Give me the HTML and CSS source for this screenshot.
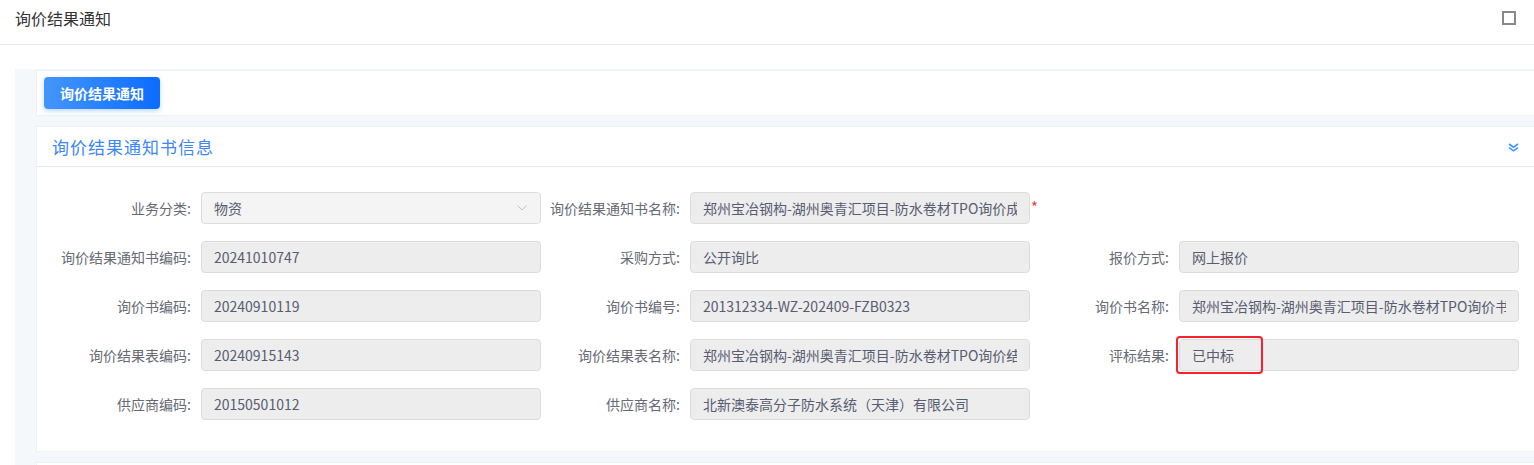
FILE: index.html
```html
<!DOCTYPE html>
<html lang="zh-CN">
<head>
<meta charset="utf-8">
<title>询价结果通知</title>
<link rel="stylesheet" href="styles.css">
</head>
<body>
<header class="page-header">
  <span class="page-title">询价结果通知</span>
  <span class="max-icon"></span>
</header>
<main class="main">
  <div class="content">
    <div class="card toolbar">
      <button class="btn-primary" type="button">询价结果通知</button>
    </div>
    <section class="card panel">
      <div class="panel-head">
        <span class="panel-title">询价结果通知书信息</span>
        <svg class="collapse-icon" width="11" height="9" viewBox="0 0 11 9"><polyline points="1,1 5.5,4.2 10,1" fill="none" stroke="#3f95ff" stroke-width="1.6"/><polyline points="1,4.6 5.5,7.8 10,4.6" fill="none" stroke="#3f95ff" stroke-width="1.6"/></svg>
      </div>
      <div class="form-grid">
        <div class="field">
          <label class="label">业务分类:</label>
          <div class="control select">
            <input class="input input-select" value="物资" readonly>
            <svg class="select-arrow" width="10" height="6" viewBox="0 0 10 6"><polyline points="0.5,0.5 5,5 9.5,0.5" fill="none" stroke="#c0c4cc" stroke-width="1"/></svg>
          </div>
        </div>
        <div class="field">
          <label class="label">询价结果通知书名称:</label>
          <div class="control">
            <input class="input" value="郑州宝冶钢构-湖州奥青汇项目-防水卷材TPO询价成交通知书" readonly>
            <span class="required">*</span>
          </div>
        </div>
        <div class="field"></div>

        <div class="field">
          <label class="label">询价结果通知书编码:</label>
          <div class="control"><input class="input" value="20241010747" readonly></div>
        </div>
        <div class="field">
          <label class="label">采购方式:</label>
          <div class="control"><input class="input" value="公开询比" readonly></div>
        </div>
        <div class="field">
          <label class="label">报价方式:</label>
          <div class="control"><input class="input" value="网上报价" readonly></div>
        </div>

        <div class="field">
          <label class="label">询价书编码:</label>
          <div class="control"><input class="input" value="20240910119" readonly></div>
        </div>
        <div class="field">
          <label class="label">询价书编号:</label>
          <div class="control"><input class="input" value="201312334-WZ-202409-FZB0323" readonly></div>
        </div>
        <div class="field">
          <label class="label">询价书名称:</label>
          <div class="control"><input class="input" value="郑州宝冶钢构-湖州奥青汇项目-防水卷材TPO询价书" readonly></div>
        </div>

        <div class="field">
          <label class="label">询价结果表编码:</label>
          <div class="control"><input class="input" value="20240915143" readonly></div>
        </div>
        <div class="field">
          <label class="label">询价结果表名称:</label>
          <div class="control"><input class="input" value="郑州宝冶钢构-湖州奥青汇项目-防水卷材TPO询价结果表" readonly></div>
        </div>
        <div class="field">
          <label class="label">评标结果:</label>
          <div class="control">
            <input class="input" value="已中标" readonly>
            <span class="highlight"></span>
          </div>
        </div>

        <div class="field">
          <label class="label">供应商编码:</label>
          <div class="control"><input class="input" value="20150501012" readonly></div>
        </div>
        <div class="field">
          <label class="label">供应商名称:</label>
          <div class="control"><input class="input" value="北新澳泰高分子防水系统（天津）有限公司" readonly></div>
        </div>
        <div class="field"></div>
      </div>
    </section>
    <div class="card next-card"></div>
  </div>
</main>
</body>
</html>
```
FILE: styles.css
```css
* { box-sizing: border-box; }

html, body {
  margin: 0;
  padding: 0;
  background: #ffffff;
  font-family: "Noto Sans CJK SC", "Noto Sans", sans-serif;
  overflow: hidden;
}

.page-header {
  height: 45px;
  border-bottom: 1px solid #e6e6e6;
  display: flex;
  align-items: center;
  justify-content: space-between;
  padding: 0 18px 9px 15px;
}

.page-title {
  font-size: 16px;
  color: #333333;
}

.max-icon {
  width: 14px;
  height: 14px;
  border: 2px solid #888888;
}

.main {
  padding-top: 24px;
}

.content {
  margin-left: 15px;
  background: #f5f8fb;
  padding: 1px 0 0 21px;
}

.card {
  background: #ffffff;
  border: 1px solid #eef1f5;
  border-right: none;
}

.toolbar {
  padding: 6px 0 6px 7px;
}

.btn-primary {
  display: block;
  width: 116px;
  height: 32px;
  border: none;
  border-radius: 4px;
  background: linear-gradient(90deg, #4596fa 0%, #0b6cff 100%);
  box-shadow: 0 2px 5px rgba(40, 120, 255, 0.3);
  color: #ffffff;
  font-family: inherit;
  font-size: 14px;
  font-weight: 700;
  cursor: pointer;
}

.panel {
  margin-top: 10px;
  padding-bottom: 31px;
}

.panel-head {
  height: 40px;
  border-bottom: 1px solid #dde9f9;
  display: flex;
  align-items: center;
  justify-content: space-between;
  padding: 0 15px 0 15px;
}

.panel-title {
  font-size: 17px;
  line-height: 20px;
  letter-spacing: 1px;
  color: #3d86f5;
}

.collapse-icon {
  margin-top: 2px;
}

.form-grid {
  display: grid;
  grid-template-columns: repeat(3, 489px);
  row-gap: 17px;
  padding: 25px 0 0 15px;
}

.field {
  display: flex;
  align-items: center;
  height: 32px;
}

.label {
  width: 149px;
  flex: none;
  text-align: right;
  font-size: 14px;
  color: #666a73;
  padding-right: 10px;
  white-space: nowrap;
}

.control {
  position: relative;
  width: 340px;
  height: 32px;
  flex: none;
}

.input {
  display: block;
  width: 100%;
  height: 32px;
  border: 1px solid #dcdcdc;
  border-radius: 4px;
  background: #ededed;
  padding: 0 12px;
  font-family: inherit;
  font-size: 14px;
  color: #575c70;
  outline: none;
  cursor: default;
}

.input-select {
  background: #f4f4f4;
  padding-right: 30px;
}

.select-arrow {
  position: absolute;
  right: 14px;
  top: 13px;
}

.required {
  position: absolute;
  right: -8px;
  top: 4px;
  color: #f04134;
  font-size: 15px;
}

.highlight {
  position: absolute;
  left: -3px;
  top: -3px;
  width: 87px;
  height: 38px;
  border: 2px solid #f5222d;
  border-radius: 4px;
}

.next-card {
  margin-top: 10px;
  height: 20px;
}
```
